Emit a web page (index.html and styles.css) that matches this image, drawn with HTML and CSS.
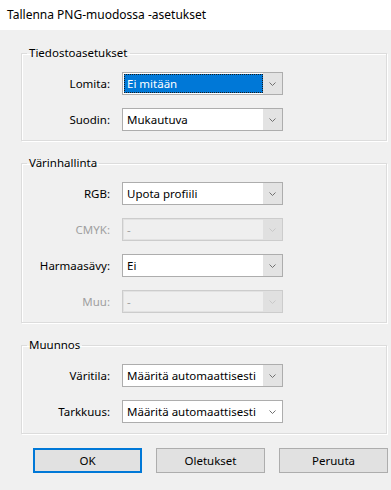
FILE: index.html
```html
<!DOCTYPE html>
<html lang="fi">

<head>
    <meta charset="UTF-8">
    <title>Tallenna PNG-muodossa -asetukset</title>
    <link rel="stylesheet" href="styles.css">
</head>

<body>
    <div class="dialog">
        <div class="title-bar">Tallenna PNG-muodossa -asetukset</div>

        <fieldset class="group">
            <legend>Tiedostoasetukset</legend>
            <div class="rows">
                <label>Lomita:</label>
                <div class="combo">
                    <span class="value selected">Ei mitään</span>
                    <span class="arrow"><svg width="7" height="4" viewBox="0 0 7 4"><path d="M0.5 0.5 L3.5 3.5 L6.5 0.5" fill="none" stroke="#707070" stroke-width="1"/></svg></span>
                </div>
                <label>Suodin:</label>
                <div class="combo">
                    <span class="value">Mukautuva</span>
                    <span class="arrow"><svg width="7" height="4" viewBox="0 0 7 4"><path d="M0.5 0.5 L3.5 3.5 L6.5 0.5" fill="none" stroke="#707070" stroke-width="1"/></svg></span>
                </div>
            </div>
        </fieldset>

        <fieldset class="group">
            <legend>Värinhallinta</legend>
            <div class="rows">
                <label>RGB:</label>
                <div class="combo">
                    <span class="value">Upota profiili</span>
                    <span class="arrow"><svg width="7" height="4" viewBox="0 0 7 4"><path d="M0.5 0.5 L3.5 3.5 L6.5 0.5" fill="none" stroke="#707070" stroke-width="1"/></svg></span>
                </div>
                <label class="disabled">CMYK:</label>
                <div class="combo disabled">
                    <span class="value">-</span>
                    <span class="arrow"><svg width="7" height="4" viewBox="0 0 7 4"><path d="M0.5 0.5 L3.5 3.5 L6.5 0.5" fill="none" stroke="#C8C8C8" stroke-width="1"/></svg></span>
                </div>
                <label>Harmaasävy:</label>
                <div class="combo">
                    <span class="value">Ei</span>
                    <span class="arrow"><svg width="7" height="4" viewBox="0 0 7 4"><path d="M0.5 0.5 L3.5 3.5 L6.5 0.5" fill="none" stroke="#707070" stroke-width="1"/></svg></span>
                </div>
                <label class="disabled">Muu:</label>
                <div class="combo disabled">
                    <span class="value">-</span>
                    <span class="arrow"><svg width="7" height="4" viewBox="0 0 7 4"><path d="M0.5 0.5 L3.5 3.5 L6.5 0.5" fill="none" stroke="#C8C8C8" stroke-width="1"/></svg></span>
                </div>
            </div>
        </fieldset>

        <fieldset class="group">
            <legend>Muunnos</legend>
            <div class="rows">
                <label>Väritila:</label>
                <div class="combo">
                    <span class="value">Määritä automaattisesti</span>
                    <span class="arrow"><svg width="7" height="4" viewBox="0 0 7 4"><path d="M0.5 0.5 L3.5 3.5 L6.5 0.5" fill="none" stroke="#707070" stroke-width="1"/></svg></span>
                </div>
                <label>Tarkkuus:</label>
                <div class="combo hot">
                    <span class="value">Määritä automaattisesti</span>
                    <span class="arrow"><svg width="7" height="4" viewBox="0 0 7 4"><path d="M0.5 0.5 L3.5 3.5 L6.5 0.5" fill="none" stroke="#707070" stroke-width="1"/></svg></span>
                </div>
            </div>
        </fieldset>

        <div class="action-buttons">
            <button class="btn default">OK</button>
            <button class="btn">Oletukset</button>
            <button class="btn">Peruuta</button>
        </div>
    </div>
</body>

</html>
```

FILE: styles.css
```css
body {
    margin: 0;
    background-color: #F0F0F0;
    font-family: 'Noto Sans', 'Open Sans', sans-serif;
    font-size: 11.5px;
    color: #000;
}

.dialog {
    width: 391px;
    height: 490px;
    overflow: hidden;
}

.title-bar {
    height: 30px;
    line-height: 30px;
    padding-left: 7px;
    background-color: #fff;
    font-size: 12px;
}

.group {
    margin: 14px 4px 0 21px;
    padding: 11px 0 9px 5px;
    border: 1px solid #DCDCDC;
    box-shadow: inset 1px 1px 0 #fff, 1px 1px 0 #fff;
}

.group:first-of-type {
    margin-top: 15px;
}

.group:last-of-type {
    padding-bottom: 10px;
}

.group legend {
    padding: 0 2px;
    line-height: 16px;
}

.rows {
    display: grid;
    grid-template-columns: 83px 161px;
    column-gap: 12px;
    row-gap: 13px;
    align-items: center;
}

.rows label {
    text-align: right;
}

.rows label.disabled {
    color: #A0A0A0;
}

.combo {
    display: flex;
    height: 23px;
    box-sizing: border-box;
    border: 1px solid #ADADAD;
    background-color: #fff;
}

.combo .value {
    flex: 1;
    padding-left: 4px;
    line-height: 21px;
    white-space: nowrap;
    overflow: hidden;
}

.combo .value.selected {
    margin: 1px 0 1px 1px;
    padding-left: 3px;
    line-height: 19px;
    background-color: #0078D7;
    color: #fff;
    outline: 1px dotted #1a1a1a;
    outline-offset: -1px;
}

.combo .arrow {
    width: 19px;
    display: flex;
    align-items: center;
    justify-content: center;
    background-color: #E3E3E3;
}

.combo.hot .arrow {
    background-color: #fff;
}

.combo.disabled {
    border-color: #CCCCCC;
    background-color: #EFEFEF;
    box-shadow: inset 0 0 0 1px #E2E2E2;
    color: #A0A0A0;
}

.combo.disabled .arrow {
    background-color: #E0E0E0;
}

.action-buttons {
    display: flex;
    gap: 14px;
    padding: 14px 0 0 33px;
}

.btn {
    width: 109px;
    height: 25px;
    box-sizing: border-box;
    border: 1px solid #ADADAD;
    background-color: #E1E1E1;
    font-family: inherit;
    font-size: 11.5px;
    color: #000;
    padding: 0;
}

.btn.default {
    border: 2px solid #0078D7;
}
```
